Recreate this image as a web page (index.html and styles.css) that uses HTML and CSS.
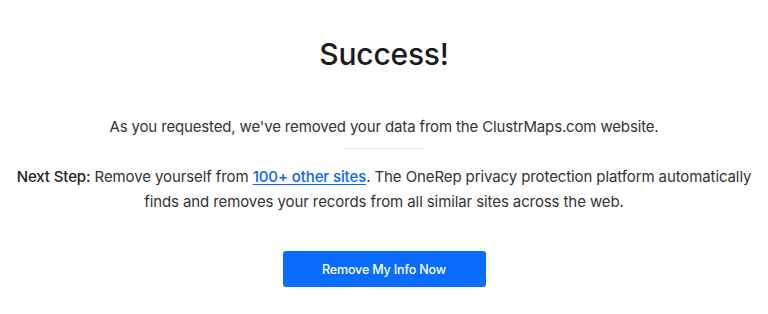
FILE: index.html
```html
<!DOCTYPE html>
<html>
<head>
<meta charset="utf-8">
<link rel="stylesheet" href="styles.css">
</head>
<body>
<main class="page">
  <h1 class="title">Success!</h1>
  <p class="lead">As you requested, we've removed your data from the ClustrMaps.com website.</p>
  <hr class="divider">
  <p class="next"><strong>Next Step:</strong> Remove yourself from <a href="#" class="link">100+ other sites</a>. The OneRep privacy protection platform automatically finds and removes your records from all similar sites across the web.</p>
  <a href="#" class="btn">Remove My Info Now</a>
</main>
</body>
</html>
```
FILE: styles.css
```css
html, body {
  margin: 0;
  padding: 0;
  background: #ffffff;
}
body {
  font-family: Inter, "Noto Sans", sans-serif;
  color: #333333;
}
.page {
  width: 768px;
  height: 314px;
  display: flex;
  flex-direction: column;
  align-items: center;
  text-align: center;
  padding-top: 34px;
  box-sizing: border-box;
}
.title {
  margin: 0;
  font-size: 30px;
  line-height: 40px;
  font-weight: 500;
  color: #1b1b1b;
  letter-spacing: -0.2px;
}
.lead {
  margin: 41px 0 0;
  font-size: 15px;
  line-height: 24px;
  letter-spacing: -0.15px;
}
.divider {
  width: 81px;
  height: 1px;
  border: 0;
  background: #e9e9e9;
  margin: 9px 0 0;
}
.next {
  margin: 15px 0 0;
  font-size: 15px;
  line-height: 25px;
  width: 750px;
  letter-spacing: -0.1px;
}
.next strong {
  font-weight: 500;
  color: #222;
}
.link {
  color: #0a66f0;
  font-weight: 500;
  text-decoration: underline;
  text-underline-offset: 2px;
}
.btn {
  margin-top: 37px;
  width: 203px;
  height: 36px;
  box-sizing: border-box;
  display: flex;
  align-items: center;
  justify-content: center;
  background: #0a6cff;
  color: #ffffff;
  border-radius: 3px;
  font-size: 12.5px;
  font-weight: 500;
  text-decoration: none;
  letter-spacing: -0.15px;
}
```
